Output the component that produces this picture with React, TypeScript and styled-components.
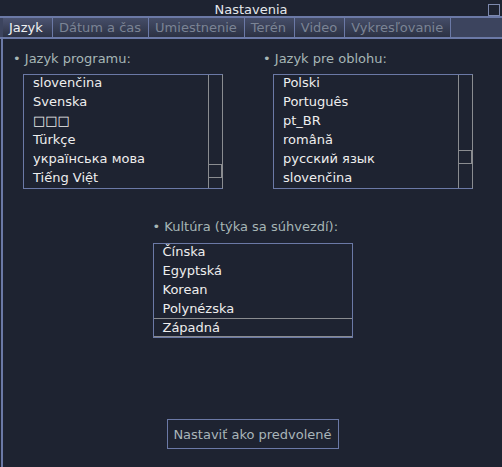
import styled, { createGlobalStyle } from 'styled-components'

const GlobalStyle = createGlobalStyle`
  html, body {
    margin: 0;
    padding: 0;
    background: #1e2331;
  }
  body {
    font-family: 'DejaVu Sans', sans-serif;
    font-size: 13px;
  }
`

const LINE = '#6b79a6'
const GRAY = '#8a8c90'

const programLangs = [
  'slovenčina',
  'Svenska',
  '□□□',
  'Türkçe',
  'українська мова',
  'Tiếng Việt',
]
const skyLangs = [
  'Polski',
  'Português',
  'pt_BR',
  'română',
  'русский язык',
  'slovenčina',
]
const cultures = ['Čínska', 'Egyptská', 'Korean', 'Polynézska', 'Západná']

const tabs = [
  'Jazyk',
  'Dátum a čas',
  'Umiestnenie',
  'Terén',
  'Video',
  'Vykresľovanie',
]

const App = () => {
  return (
    <Window>
      <GlobalStyle />
      <TitleBar>
        <span />
        <Title>Nastavenia</Title>
        <CloseBox />
      </TitleBar>
      <TabBar>
        {tabs.map((t, i) => (
          <Tab key={t} active={i === 0}>
            {t}
          </Tab>
        ))}
      </TabBar>
      <Body>
        <Columns>
          <Section>
            <Label>• Jazyk programu:</Label>
            <ListBox>
              <Items>
                {programLangs.map((l) => (
                  <Item key={l}>{l}</Item>
                ))}
              </Items>
              <ScrollTrack>
                <Thumb top={89} />
              </ScrollTrack>
            </ListBox>
          </Section>
          <Section>
            <Label>• Jazyk pre oblohu:</Label>
            <ListBox>
              <Items>
                {skyLangs.map((l, i) => (
                  <Item key={l + i}>{l}</Item>
                ))}
              </Items>
              <ScrollTrack>
                <Thumb top={75} />
              </ScrollTrack>
            </ListBox>
          </Section>
        </Columns>
        <Culture>
          <Label>• Kultúra (týka sa súhvezdí):</Label>
          <CultureBox>
            {cultures.map((c, i) => (
              <Item key={c} selected={i === cultures.length - 1}>
                {c}
              </Item>
            ))}
          </CultureBox>
        </Culture>
        <ButtonRow>
          <DefaultButton>Nastaviť ako predvolené</DefaultButton>
        </ButtonRow>
      </Body>
    </Window>
  )
}

const Window = styled.div`
  width: 502px;
  height: 467px;
  display: flex;
  flex-direction: column;
  background: #1e2331;
  overflow: hidden;
`

const TitleBar = styled.div`
  height: 16px;
  display: grid;
  grid-template-columns: 1fr auto 1fr;
  align-items: center;
`

const Title = styled.div`
  color: #e4e8ec;
  line-height: 16px;
  padding-top: 2px;
`

const CloseBox = styled.div`
  justify-self: end;
  width: 10px;
  height: 10px;
  margin-right: 2px;
  margin-top: 2px;
  border: 1px solid #7d89ad;
`

const TabBar = styled.div`
  height: 19px;
  display: flex;
  border-top: 2px solid ${LINE};
  border-bottom: 2px solid ${LINE};
  padding-left: 3px;
  background: #3c445e;
`

const Tab = styled.div<{ active?: boolean }>`
  padding: 0 7px 0 6px;
  min-width: 36px;
  line-height: 19px;
  border-right: 1px solid ${LINE};
  color: ${({ active }) => (active ? '#eef0f2' : '#7b8495')};
  background: linear-gradient(
    to bottom,
    ${({ active }) => (active ? '#4c5472' : '#454d68')} 0%,
    #2c3244 100%
  );
  font-size: 13px;
`

const Body = styled.div`
  flex: 1;
  border-left: 2px solid ${LINE};
  margin-left: 1px;
  display: flex;
  flex-direction: column;
  padding-top: 12px;
`

const Columns = styled.div`
  display: grid;
  grid-template-columns: 250px 250px;
  padding-left: 10px;
`

const Section = styled.div`
  display: flex;
  flex-direction: column;
`

const Label = styled.div`
  color: #a6b6b6;
  line-height: 16px;
  height: 16px;
`

const ListBox = styled.div`
  margin-top: 7px;
  margin-left: 10px;
  width: 198px;
  height: 113px;
  display: flex;
  border: 1px solid ${LINE};
  border-right-color: ${GRAY};
`

const Items = styled.div`
  flex: 1;
  margin-top: -2px;
  overflow: hidden;
`

const Item = styled.div<{ selected?: boolean }>`
  height: 19px;
  padding-left: 9px;
  color: #eeeeee;
  box-sizing: border-box;
  border-top: 1px solid ${({ selected }) => (selected ? GRAY : 'transparent')};
  border-bottom: 1px solid ${({ selected }) => (selected ? GRAY : 'transparent')};
  line-height: 17px;
`

const ScrollTrack = styled.div`
  width: 13px;
  border-left: 1px solid ${GRAY};
  position: relative;
`

const Thumb = styled.div<{ top: number }>`
  position: absolute;
  left: 0;
  right: 0;
  top: ${({ top }) => top}px;
  height: 12px;
  border: 1px solid ${GRAY};
  border-left: none;
`

const Culture = styled.div`
  margin-top: 30px;
  align-self: center;
  display: flex;
  flex-direction: column;
`

const CultureBox = styled.div`
  margin-top: 8px;
  margin-left: 0;
  width: 198px;
  height: 93px;
  border: 1px solid ${LINE};
  overflow: hidden;
  & > div:first-child {
    margin-top: -2px;
  }
`

const ButtonRow = styled.div`
  margin-top: 81px;
  display: flex;
  justify-content: center;
`

const DefaultButton = styled.div`
  width: 170px;
  height: 28px;
  border: 1px solid ${LINE};
  color: #a9b5b9;
  display: flex;
  align-items: center;
  justify-content: center;
`

export default App
